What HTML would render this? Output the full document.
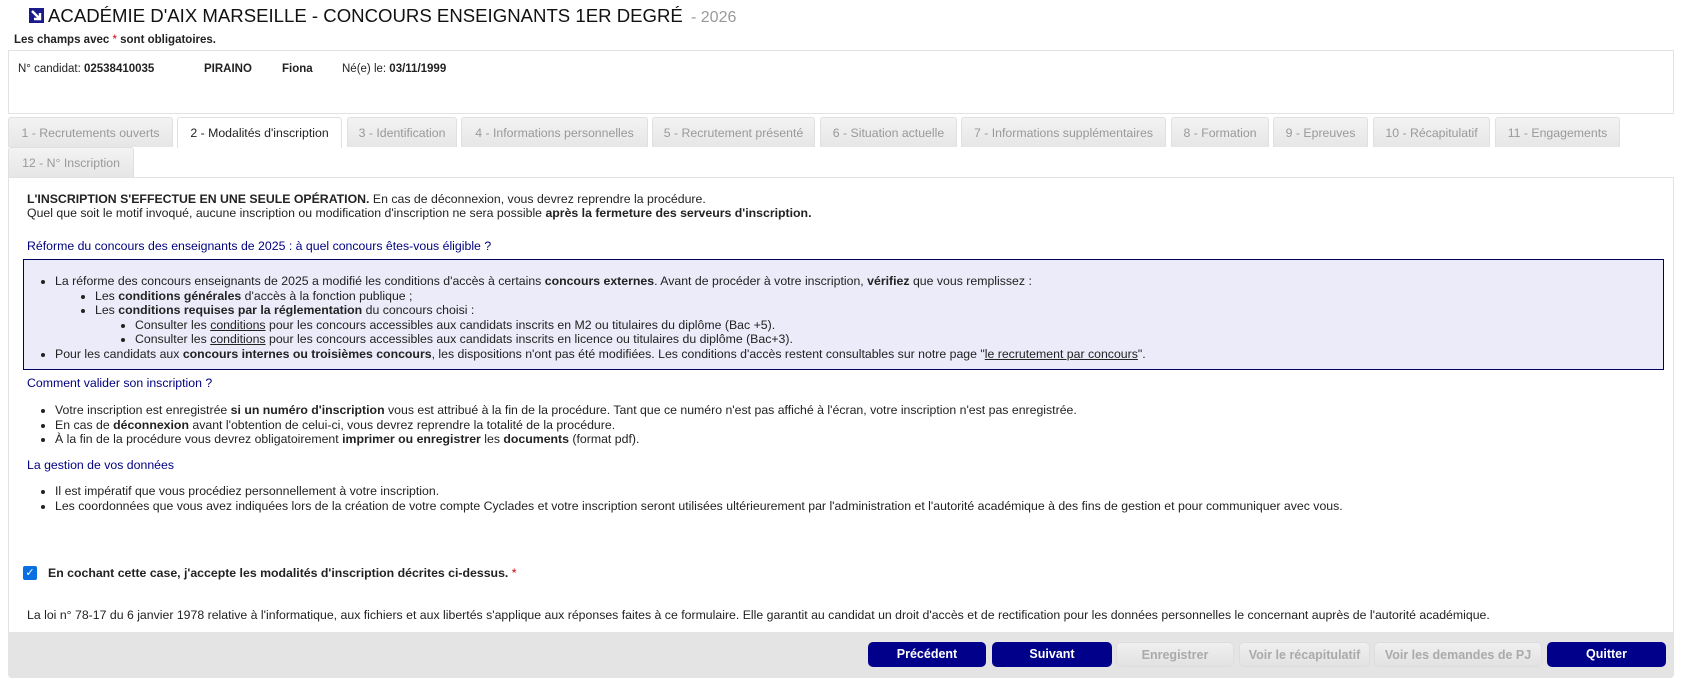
<!DOCTYPE html>
<html><head><meta charset="utf-8"><style>
*{box-sizing:border-box;margin:0;padding:0}
body{width:1685px;height:688px;background:#fff;font-family:"Liberation Sans",Arial,sans-serif;font-size:12.3px;color:#222;position:relative;overflow:hidden}
h1{position:absolute;left:29px;top:5px;font-size:18.6px;font-weight:normal;color:#111;white-space:nowrap}
h1 .y{color:#999;font-size:16px;margin-left:3px}
.ico{display:inline-block;width:15px;height:15px;background:#1a1a8c;vertical-align:-1px;margin-right:4px;position:relative}
.req{position:absolute;left:14px;top:34px;font-weight:bold;font-size:11.5px}
.req i{color:#c00;font-style:normal;font-weight:normal}
.info{position:absolute;left:8px;top:50px;width:1666px;height:64px;border:1px solid #e2e2e2}
.info span{position:absolute;top:12px;font-size:11.5px}
.tab{position:absolute;height:30px;background:linear-gradient(#f3f3f3,#e6e6e6);border:1px solid #e0e0e0;border-bottom:none;border-radius:3px 3px 0 0;color:#999;font-size:12.3px;text-align:center;line-height:30px;white-space:nowrap}
.tab.on{background:#fff;color:#222;height:31px}
.content{position:absolute;left:8px;top:177px;width:1666px;height:501px;border:1px solid #e2e2e2;border-radius:0 0 4px 4px}
.t{position:absolute;left:27px;white-space:nowrap}
.blue{color:#000080}
.box{position:absolute;left:23px;top:259px;width:1641px;height:111px;background:#ebebf9;border:1px solid #000060}
ul{list-style:disc}
li{white-space:nowrap;line-height:14.5px}
.l1{position:absolute;left:55px}
a{color:#222;text-decoration:underline}
.foot{position:absolute;left:8px;top:632px;width:1666px;height:46px;background:#e4e4e4;border-radius:0 0 4px 4px}
.btn{position:absolute;top:642px;height:25px;border-radius:5px;font-weight:bold;font-size:12.5px;text-align:center;line-height:25px;white-space:nowrap}
.bb{background:#00008b;color:#fff}
.bg{background:linear-gradient(#f0f0f0,#e2e2e2);color:#aaa;border:1px solid #ddd}
.cb{position:absolute;left:23px;top:566px;width:14px;height:14px;background:#0a6fe0;border-radius:2px;color:#fff;font-size:11px;line-height:14px;text-align:center}
</style></head><body>
<h1><span class="ico"><svg width="15" height="15" viewBox="0 0 15 15" style="position:absolute;left:0;top:0"><path d="M3 3 L11 11 M11 5 L11 11 L5 11" stroke="#fff" stroke-width="2.4" fill="none"/></svg></span>ACADÉMIE D'AIX MARSEILLE - CONCOURS ENSEIGNANTS 1ER DEGRÉ <span class="y">- 2026</span></h1>
<div class="req">Les champs avec <i>*</i> sont obligatoires.</div>
<div class="info">
<span style="left:9px">N° candidat: <b>02538410035</b></span>
<span style="left:195px"><b>PIRAINO</b></span>
<span style="left:273px"><b>Fiona</b></span>
<span style="left:333px">Né(e) le: <b>03/11/1999</b></span>
</div>
<div class="tab" style="left:8px;top:117px;width:165px">1 - Recrutements ouverts</div>
<div class="tab on" style="left:177px;top:117px;width:165px">2 - Modalités d'inscription</div>
<div class="tab" style="left:347px;top:117px;width:110px">3 - Identification</div>
<div class="tab" style="left:461px;top:117px;width:187px">4 - Informations personnelles</div>
<div class="tab" style="left:652px;top:117px;width:163px">5 - Recrutement présenté</div>
<div class="tab" style="left:820px;top:117px;width:137px">6 - Situation actuelle</div>
<div class="tab" style="left:961px;top:117px;width:205px">7 - Informations supplémentaires</div>
<div class="tab" style="left:1171px;top:117px;width:98px">8 - Formation</div>
<div class="tab" style="left:1273px;top:117px;width:95px">9 - Epreuves</div>
<div class="tab" style="left:1373px;top:117px;width:117px">10 - Récapitulatif</div>
<div class="tab" style="left:1495px;top:117px;width:125px">11 - Engagements</div>
<div class="tab" style="left:8px;top:147px;width:126px">12 - N° Inscription</div>
<div class="content"></div>
<div class="t" style="top:192px"><b>L'INSCRIPTION S'EFFECTUE EN UNE SEULE OPÉRATION.</b> En cas de déconnexion, vous devrez reprendre la procédure.</div>
<div class="t" style="top:206px">Quel que soit le motif invoqué, aucune inscription ou modification d'inscription ne sera possible <b>après la fermeture des serveurs d'inscription.</b></div>
<div class="t blue" style="top:239px">Réforme du concours des enseignants de 2025 : à quel concours êtes-vous éligible ?</div>
<div class="box"></div>
<ul class="l1" style="top:274px">
<li>La réforme des concours enseignants de 2025 a modifié les conditions d'accès à certains <b>concours externes</b>. Avant de procéder à votre inscription, <b>vérifiez</b> que vous remplissez :
<ul style="margin-left:40px;list-style:disc">
<li>Les <b>conditions générales</b> d'accès à la fonction publique ;</li>
<li>Les <b>conditions requises par la réglementation</b> du concours choisi :
<ul style="margin-left:40px;list-style:disc"><li>Consulter les <a>conditions</a> pour les concours accessibles aux candidats inscrits en M2 ou titulaires du diplôme (Bac +5).</li>
<li>Consulter les <a>conditions</a> pour les concours accessibles aux candidats inscrits en licence ou titulaires du diplôme (Bac+3).</li></ul></li>
</ul></li>
<li>Pour les candidats aux <b>concours internes ou troisièmes concours</b>, les dispositions n'ont pas été modifiées. Les conditions d'accès restent consultables sur notre page "<a>le recrutement par concours</a>".</li>
</ul>
<div class="t blue" style="top:376px">Comment valider son inscription ?</div>
<ul class="l1" style="top:403px">
<li>Votre inscription est enregistrée <b>si un numéro d'inscription</b> vous est attribué à la fin de la procédure. Tant que ce numéro n'est pas affiché à l'écran, votre inscription n'est pas enregistrée.</li>
<li>En cas de <b>déconnexion</b> avant l'obtention de celui-ci, vous devrez reprendre la totalité de la procédure.</li>
<li>À la fin de la procédure vous devrez obligatoirement <b>imprimer ou enregistrer</b> les <b>documents</b> (format pdf).</li>
</ul>
<div class="t blue" style="top:458px">La gestion de vos données</div>
<ul class="l1" style="top:484px">
<li>Il est impératif que vous procédiez personnellement à votre inscription.</li>
<li>Les coordonnées que vous avez indiquées lors de la création de votre compte Cyclades et votre inscription seront utilisées ultérieurement par l'administration et l'autorité académique à des fins de gestion et pour communiquer avec vous.</li>
</ul>
<div class="cb">✓</div>
<div class="t" style="left:48px;top:566px;font-weight:bold">En cochant cette case, j'accepte les modalités d'inscription décrites ci-dessus. <span style="color:#c00;font-weight:normal">*</span></div>
<div class="t" style="top:608px">La loi n° 78-17 du 6 janvier 1978 relative à l'informatique, aux fichiers et aux libertés s'applique aux réponses faites à ce formulaire. Elle garantit au candidat un droit d'accès et de rectification pour les données personnelles le concernant auprès de l'autorité académique.</div>
<div class="foot"></div>
<div class="btn bb" style="left:868px;width:118px">Précédent</div>
<div class="btn bb" style="left:992px;width:120px">Suivant</div>
<div class="btn bg" style="left:1116px;width:118px">Enregistrer</div>
<div class="btn bg" style="left:1239px;width:131px">Voir le récapitulatif</div>
<div class="btn bg" style="left:1374px;width:168px">Voir les demandes de PJ</div>
<div class="btn bb" style="left:1547px;width:119px">Quitter</div>
</body></html>
